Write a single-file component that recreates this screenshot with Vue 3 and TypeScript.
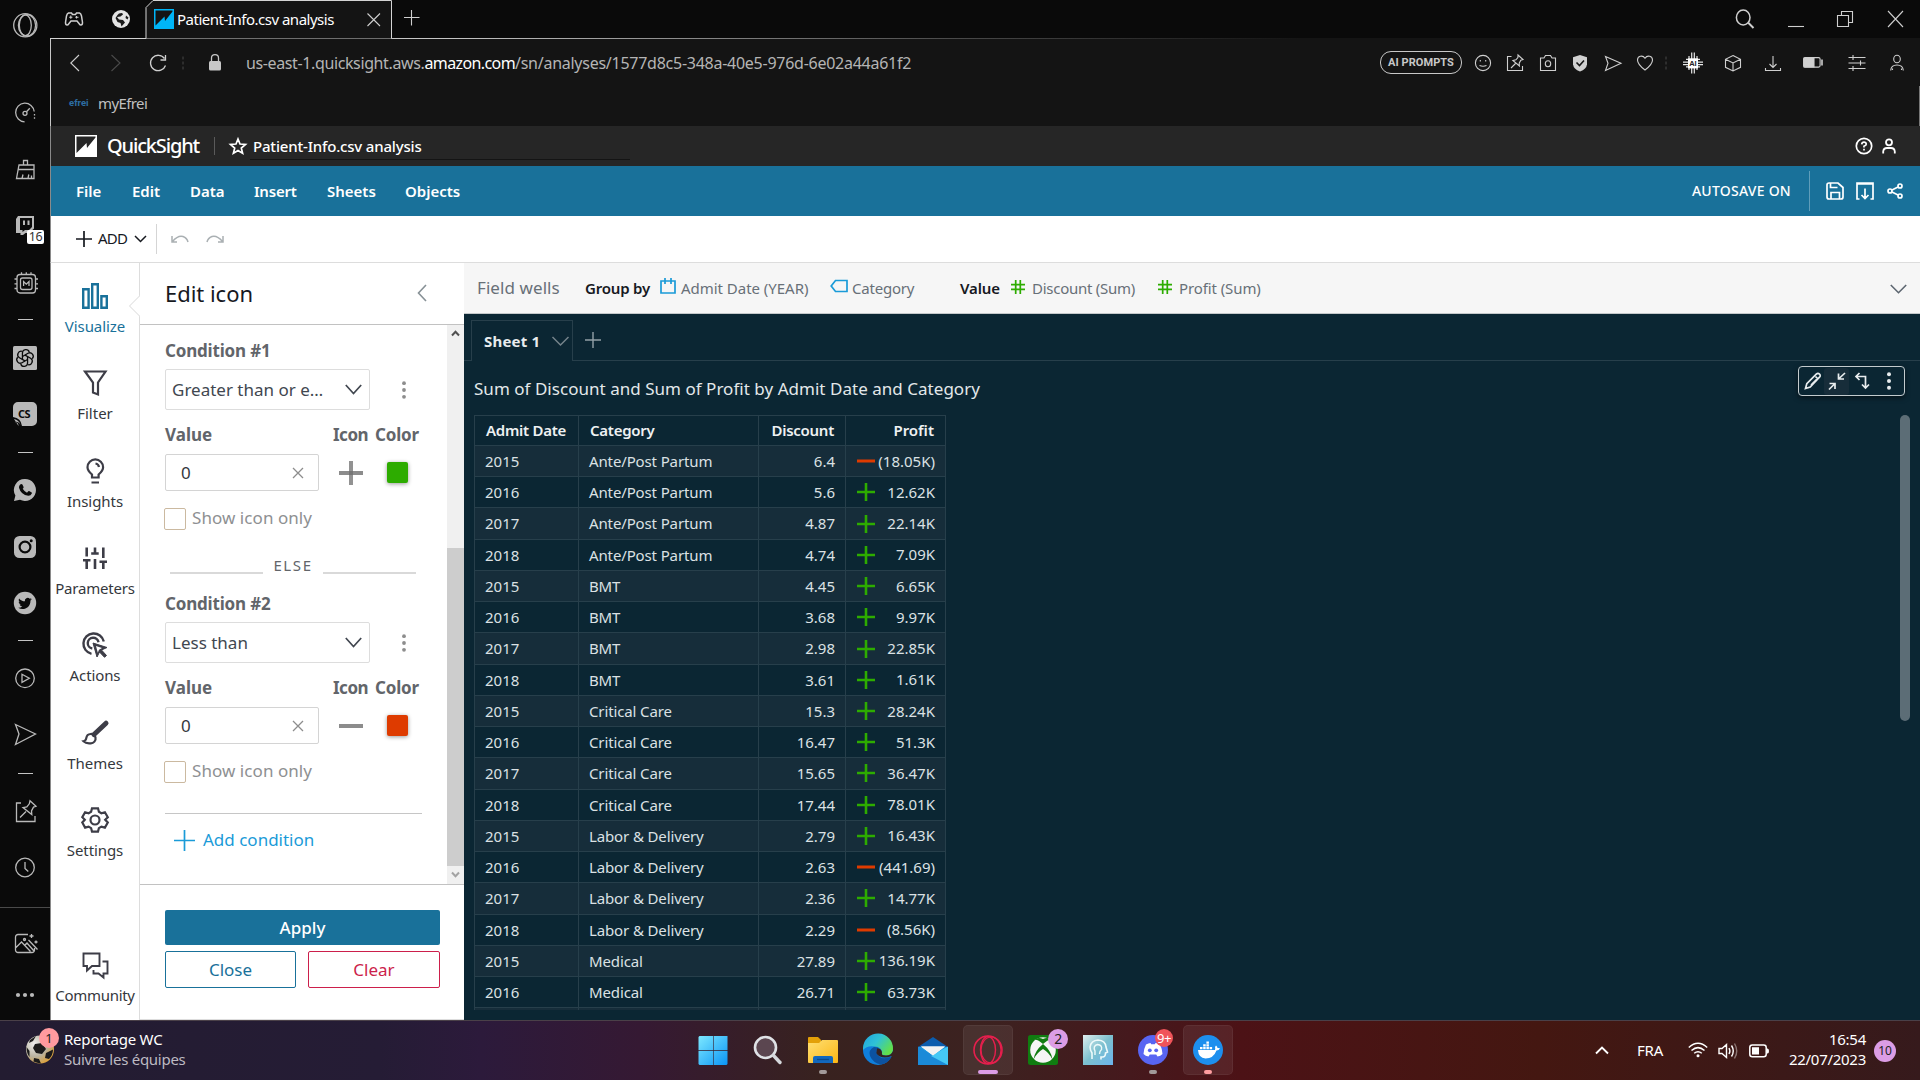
<script setup lang="ts">
interface SideItem { kind: 'icon' | 'dash' | 'rule'; gap: number; svg?: string; badge?: string }
interface NavIcon { gap: number; svg: string }
interface RailItem { label: string; svg: string; track: string; active?: boolean }
interface Row { year: number; category: string; discount: string; profit: string }
interface Condition { title: string; operator: string; value: string; color: string; sign: 'plus' | 'minus' }
interface TaskIcon { svg: string; active?: boolean; mark?: string; badge?: string; badgeKind?: string }

const sideItems: SideItem[] = [
  { kind: 'icon', gap: 13, svg: '<circle cx="12.3" cy="12.3" r="11.6"/><ellipse cx="12.3" cy="12.3" rx="6" ry="10.4"/><ellipse cx="14" cy="12.3" rx="8.6" ry="10.6"/>' },
  { kind: 'icon', gap: 63, svg: '<path d="M11.6 21.8A9.300 9.300 0 1 1 21.200 11.500"/><path d="M21.500 14v6" stroke-dasharray="1.6 1.6"/><circle cx="12" cy="13.300" r="2"/><path d="M13.500 11.800l3.300-3.500"/>' },
  { kind: 'icon', gap: 34, svg: '<path d="M10.500 7V2.500h4V7M6 7h15v13.500H3.500L6 7zM5.500 11.500h15.500M9 20.500l1-4M15 20.500l.8-4M18.500 20.500v-3"/>' },
  { kind: 'icon', gap: 32, badge: '16', svg: '<path fill="#b9b9b9" stroke="none" d="M5 2h16v12.500l-5 4.500h-3.500L10 21H7.500v-2H3V5z"/><path fill="#0a0a0a" stroke="none" d="M7 4h12v9l-3 3h-4l-2.500 2v-2H7z"/><path d="M11 6.500v4.500M15.500 6.500v4.500" stroke-width="2"/>' },
  { kind: 'icon', gap: 33, svg: '<rect x="4" y="3.5" width="18.5" height="18.5" rx="3"/><rect x="7.5" y="7" width="11.5" height="11.5" rx="2"/><path d="M8.500 3.500V1.200M13.300 3.500V1.200M18 3.500V1.200M4 8H1.500M4 12.800H1.500M4 17.500H1.500M22.500 8H25M22.500 12.800H25M22.500 17.500H25M10.600 15v-4.500l2.700 2.600 2.700-2.600V15"/>' },
  { kind: 'dash', gap: 24 },
  { kind: 'icon', gap: 26, svg: '<rect x="0" y="0" width="24" height="24" rx="1.5" fill="#b9b9b9" stroke="none"/><g stroke="#0a0a0a" stroke-width="1.3"><path d="M9.500 10.500l5.500-3.200a3.500 3.500 0 0 1 4.300 5.400"/><path d="M9.500 10.500l5.500-3.200a3.500 3.500 0 0 1 4.300 5.400" transform="rotate(60 12 12)"/><path d="M9.500 10.500l5.500-3.200a3.500 3.500 0 0 1 4.300 5.400" transform="rotate(120 12 12)"/><path d="M9.500 10.500l5.500-3.200a3.500 3.500 0 0 1 4.300 5.400" transform="rotate(180 12 12)"/><path d="M9.500 10.500l5.500-3.200a3.500 3.500 0 0 1 4.300 5.400" transform="rotate(240 12 12)"/><path d="M9.500 10.500l5.500-3.200a3.500 3.500 0 0 1 4.300 5.400" transform="rotate(300 12 12)"/></g>' },
  { kind: 'icon', gap: 32, svg: '<path d="M5 0h14a5 5 0 0 1 5 5v14a5 5 0 0 1-5 5H9Q8 16 0 15V5a5 5 0 0 1 5-5z" fill="#b9b9b9" stroke="none"/><path d="M1 17q5 1 6.500 6q-2-4-6-3q4 0 4 4" fill="#b9b9b9" stroke="none"/><text x="5" y="16" font-size="11" font-weight="700" fill="#0a0a0a" stroke="none" letter-spacing="-.6">CS</text>' },
  { kind: 'dash', gap: 26 },
  { kind: 'icon', gap: 25, svg: '<path d="M12 1a11 11 0 1 1-5 20.800L1 23l1.400-5.500A11 11 0 0 1 12 1z" fill="#b9b9b9" stroke="none"/><path d="M7.200 6.500q1.300-1.200 2.200 0l1.200 2.400q.2.800-.9 1.900q1.600 2.700 4.300 3.900l1.300-1.500q.6-.5 1.300 0l2.100 1.200q.4.400.1 1.200q-1 2.300-3.500 2.200Q8 17 6 9.800q-.2-2 1.200-3.300z" fill="#0a0a0a" stroke="none"/>' },
  { kind: 'icon', gap: 33, svg: '<rect x="1" y="1" width="22" height="22" rx="5.5" fill="#b9b9b9" stroke="none"/><circle cx="12" cy="12" r="5.4" stroke="#0a0a0a" stroke-width="2.2"/><circle cx="18.2" cy="5.8" r="1.5" fill="#0a0a0a" stroke="none"/>' },
  { kind: 'icon', gap: 32, svg: '<circle cx="12" cy="12" r="11.2" fill="#b9b9b9" stroke="none"/><path fill="#0a0a0a" stroke="none" d="M18.900 8.100c-.5.200-1 .4-1.600.5.600-.4 1-.9 1.200-1.500-.5.300-1.100.5-1.800.7a2.800 2.800 0 0 0-4.800 2.500c-2.300-.1-4.400-1.200-5.800-2.900-.7 1.200-.4 2.900.9 3.800-.5 0-.9-.1-1.300-.4 0 1.400 1 2.500 2.300 2.800-.4.100-.8.100-1.300 0 .4 1.100 1.400 1.900 2.600 2-1.200.9-2.600 1.300-4.100 1.200 4.900 3 12.300.5 12.300-7.300.6-.4 1-.9 1.400-1.400z"/>' },
  { kind: 'dash', gap: 25 },
  { kind: 'icon', gap: 25, svg: '<circle cx="12" cy="12.3" r="9.3"/><path d="M9 8.300l7.300 4-7.300 4z"/>' },
  { kind: 'icon', gap: 32, svg: '<path d="M2.500 2.500L22.500 12 2.500 22.500 6 12z"/>' },
  { kind: 'dash', gap: 27 },
  { kind: 'icon', gap: 25, svg: '<path d="M8 4H3.500v18.500H22V17M17 1.800l6 5.500-2.500.8-2 3.800.3 3.700-8.800-7 3.800-.8 2.500-3zM13 12.500l-6 6"/>' },
  { kind: 'icon', gap: 32, svg: '<circle cx="12" cy="12.5" r="9.3"/><path d="M12 7v6.500l3.300 3"/>' },
  { kind: 'rule', gap: 28 },
  { kind: 'icon', gap: 23, svg: '<path d="M15 3.500H5A2.500 2.500 0 0 0 2.500 6v13A2.500 2.500 0 0 0 5 21.500h14a2.500 2.500 0 0 0 2.500-2.500v-2M2.500 17l6-6 9 9.500M12 14l2-2 7 8M24.500 18.500L15.500 9"/><circle cx="11.5" cy="8.5" r="1"/><path d="M18.500 3v4M16.500 5h4M23 9.500v3M21.500 11h3"/>' },
  { kind: 'icon', gap: 28, svg: '<g fill="#b9b9b9" stroke="none"><circle cx="5" cy="12" r="2.1"/><circle cx="12" cy="12" r="2.1"/><circle cx="19" cy="12" r="2.1"/></g>' }
]

const navIcons: NavIcon[] = [
  { gap: 11, svg: '<circle cx="10" cy="10" r="7.6"/><path d="M7.300 7v1.500M12.700 7v1.500M6.500 12.500q3.500 1.500 7 0"/>' },
  { gap: 12, svg: '<path d="M6.500 3.500H2.500v14h15v-4.500M13 2l5 4.500-2.200.7-1.600 3 .2 2.800-6.500-5.500 3-.7 2-2.300zM10.500 10.500L6 15"/>' },
  { gap: 13, svg: '<path d="M2.500 5H6l1.500-2.500h5L14 5h3.500v12.500h-15z"/><ellipse cx="10" cy="10.8" rx="2.7" ry="3"/>' },
  { gap: 12, svg: '<path d="M10 2l7 2.200v7Q16.500 16 10 18.500 3.500 16 3 11.200v-7z" fill="#d0d0d0" stroke="none"/><path d="M6.500 9.500l3 3 4.500-5" stroke="#141414" stroke-width="1.6"/>' },
  { gap: 13, svg: '<path d="M2.500 3.500L18 10.300 2.500 17.500 5 10.300z"/>' },
  { gap: 12, svg: '<path d="M10 17C4 12.500 2.500 10 2.500 7c0-3.700 5-5.500 7.500-1.700 2.500-3.800 7.500-2 7.500 1.700 0 3-1.500 5.500-7.500 10z"/>' },
  { gap: 1, svg: '<path d="M10 3.500v13" stroke="#444" stroke-dasharray="3 2"/>' },
  { gap: 7, svg: '<path d="M8.700 0v21M11.300 0v21M6 3.500v14M14 3.500v14M3 7h14M0 9.700h20M0 12.300h20M3 14.500h14" transform="translate(0 -.6)" stroke="#e8e8e8" stroke-width="1.2"/><rect x="5" y="5.4" width="10" height="10" fill="#fff" stroke="none"/><text x="6.2" y="13.2" font-size="7.5" font-weight="700" fill="#222" stroke="none">AI</text>' },
  { gap: 20, svg: '<path d="M10 2.500l7.500 3.800v8L10 18l-7.500-3.700v-8zM2.500 6.300L10 10l7.500-3.700M10 10v8"/>' },
  { gap: 20, svg: '<path d="M10 3v11.500M6.500 11l3.500 3.500 3.500-3.500M2.500 15v2.500h15V15"/>' },
  { gap: 20, svg: '<rect x=".6" y="4.6" width="16.5" height="9.5" rx="1.5"/><path d="M1 5h10v9H1z" fill="#d0d0d0"/><path d="M19 6.500v6" stroke-width="1.6"/>' },
  { gap: 24, svg: '<path d="M1.500 4.500h17M1.500 10h17M1.500 15.500h17M6 2v5M13.500 7.500v5M6 13v5"/>' },
  { gap: 20, svg: '<ellipse cx="10" cy="6" rx="3.3" ry="3.8"/><path d="M3.700 17.500q.3-5.500 6.300-5.500t6.300 5.500M5.500 17v-1.500M14.500 17v-1.500"/>' }
]

const menus: string[] = ['File', 'Edit', 'Data', 'Insert', 'Sheets', 'Objects']

const railItems: RailItem[] = [
  { label: 'Visualize', track: '-.06', active: true, svg: '<path d="M1.200 6.200h5.400v18.600H1.200zM10.200 1.200h5.600v23.600h-5.600zM19.400 13.200h5.400v11.600h-5.400z"/>' },
  { label: 'Filter', track: '0', svg: '<path d="M3 1.500h20.500l-7.500 11v12l-5-2V12.500z"/>' },
  { label: 'Insights', track: '-.05', svg: '<path d="M10 19.500v-3Q5.500 12.500 5.500 9.200a7.800 7.800 0 0 1 15.600 0q0 3.300-4.500 7.300v3zM9.500 24.500h7.500M13.500 5.500q3 .5 3.500 3.500"/>' },
  { label: 'Parameters', track: '-.2', svg: '<path d="M4.700 2.500v9M4.700 16v8M1 15.200h7.500M13 2.500v7M13 14v10M9.200 8.500h7.500M21.300 2.500v10.500M21.300 17v7M17.500 16.800H25" stroke-width="2.6"/>' },
  { label: 'Actions', track: '-.1', svg: '<path d="M9.500 21.800A10.300 10.300 0 1 1 21.800 9.500M10.300 16.500a5.400 5.400 0 1 1 6.200-6.200" stroke-width="2.4"/><path d="M11 11l14 4.500-5.500 2.500 5 5.500-2 1.800-5-5.300-2.500 5z" fill="#3d3d47" stroke-width="1"/><path d="M14 14l6 2-3 1.800-1.200 3z" fill="#fff" stroke="none"/>' },
  { label: 'Themes', track: '0', svg: '<path d="M12 14.500L24 3.200" stroke-width="5" stroke-linecap="round"/><path d="M13.500 17.500a4.800 4.800 0 0 1-5 5.800q-4.500.5-7-2 2.500-.5 2.800-3.300a4.700 4.700 0 0 1 9.200-.5z"/>' },
  { label: 'Settings', track: '-.1', svg: '<path d="M10 1.300h6l.9 3.500 2.500 1.400 3.500-1 2.900 5-2.600 2.600 2.600 2.700-2.900 5.100-3.500-1-2.500 1.500-.9 3.500h-6l-.9-3.500-2.500-1.500-3.500 1-2.800-5.100 2.500-2.700L.3 10.200l2.800-5 3.500 1 2.500-1.400z"/><circle cx="13" cy="13" r="4.5"/>' },
  { label: 'Community', track: '-.3', svg: '<path d="M1.500 1.500h16v12.500H10l-5 4.500V14H1.500zM20.500 9.500h5V21.500H21.500v4l-5-4H11.500V18" stroke-width="1.9"/>' }
]

const conditions: Condition[] = [
  { title: 'Condition #1', operator: 'Greater than or e…', value: '0', color: '#2dac00', sign: 'plus' },
  { title: 'Condition #2', operator: 'Less than', value: '0', color: '#de3b00', sign: 'minus' }
]

const rows: Row[] = [
  { year: 2015, category: 'Ante/Post Partum', discount: '6.4', profit: '(18.05K)' },
  { year: 2016, category: 'Ante/Post Partum', discount: '5.6', profit: '12.62K' },
  { year: 2017, category: 'Ante/Post Partum', discount: '4.87', profit: '22.14K' },
  { year: 2018, category: 'Ante/Post Partum', discount: '4.74', profit: '7.09K' },
  { year: 2015, category: 'BMT', discount: '4.45', profit: '6.65K' },
  { year: 2016, category: 'BMT', discount: '3.68', profit: '9.97K' },
  { year: 2017, category: 'BMT', discount: '2.98', profit: '22.85K' },
  { year: 2018, category: 'BMT', discount: '3.61', profit: '1.61K' },
  { year: 2015, category: 'Critical Care', discount: '15.3', profit: '28.24K' },
  { year: 2016, category: 'Critical Care', discount: '16.47', profit: '51.3K' },
  { year: 2017, category: 'Critical Care', discount: '15.65', profit: '36.47K' },
  { year: 2018, category: 'Critical Care', discount: '17.44', profit: '78.01K' },
  { year: 2015, category: 'Labor & Delivery', discount: '2.79', profit: '16.43K' },
  { year: 2016, category: 'Labor & Delivery', discount: '2.63', profit: '(441.69)' },
  { year: 2017, category: 'Labor & Delivery', discount: '2.36', profit: '14.77K' },
  { year: 2018, category: 'Labor & Delivery', discount: '2.29', profit: '(8.56K)' },
  { year: 2015, category: 'Medical', discount: '27.89', profit: '136.19K' },
  { year: 2016, category: 'Medical', discount: '26.71', profit: '63.73K' }
]
const isLoss = (r: Row): boolean => r.profit.startsWith('(')

const taskIcons: TaskIcon[] = [
  { svg: '<defs><linearGradient id="win" x1="0" y1="0" x2="1" y2="1"><stop offset="0" stop-color="#7de8ff"/><stop offset="1" stop-color="#0a94f5"/></linearGradient></defs><path fill="url(#win)" d="M1.500 1h13.700v14H.5V2zM15.800 1h13.700v14H15.800zM.5 15.800h14.700V30H1.500l-1-1zM15.800 15.800h13.700V29l-1 1H15.800z"/>' },
  { svg: '<circle cx="12.5" cy="12.5" r="10.5" fill="#5b4650" stroke="#dfe2e6" stroke-width="2.6"/><path d="M20.500 20.500l6.500 7" stroke="#d5d8dc" stroke-width="3.4" stroke-linecap="round"/>' },
  { mark: 'small', svg: '<defs><linearGradient id="fol" x1="0" y1="0" x2="1" y2="1"><stop offset="0" stop-color="#ffdf73"/><stop offset="1" stop-color="#fcb714"/></linearGradient></defs><path d="M0 3q0-1 1-1h9l3 3v5H0z" fill="#e3a008"/><path d="M0 8h11l3-3h15q1 0 1 1v21q0 1-1 1H1q-1 0-1-1z" fill="url(#fol)"/><path d="M5 28v-5q0-2 2-2h16q2 0 2 2v5z" fill="#1268bd"/><path d="M9 24.500h12" stroke="#0b4a8c" stroke-width="1.3"/>' },
  { svg: '<defs><linearGradient id="edg" x1="0" y1="0" x2="1" y2=".6"><stop offset="0" stop-color="#1fa2e0"/><stop offset=".5" stop-color="#2fc2d6"/><stop offset="1" stop-color="#62e04a"/></linearGradient></defs><circle cx="15" cy="15" r="15" fill="#0f7fdc"/><path d="M0 13A15 15 0 0 1 30 14q0 6-7 6.500-5 0-4-2.500Q19 12 12 11.500 4 10 0 15z" fill="url(#edg)"/><path d="M11 12q-6 3-4 9 3 7 11 8.500 7-1 10.500-8-9 4-13.500-1-3-4 0-8z" fill="#0c52a0"/><path d="M14.500 13q-3 5 1.500 8 5.500 3 12.500 0l1.500 3V16q-2 4.500-7 4.500t-4-2.500q0-4-4.500-5z" fill="#36221f"/>' },
  { svg: '<path d="M0 12L15 2l15 10z" fill="#0b5cad"/><path d="M0 12h30v18H0z" fill="#1f9be0"/><path d="M3 11.500h24L15 20.500z" fill="#f2f2f2"/><path d="M0 11.500L30 30H0z" fill="#1b8ad8"/><path d="M30 11.500L13 21l17 9z" fill="#45c8f5"/><path d="M3 11.500h24L15 20.500z" fill="#f2f2f2"/>' },
  { active: true, mark: 'wide', svg: '<g fill="none" stroke="#e61f4d"><circle cx="15" cy="15" r="14" stroke-width="1.6"/><ellipse cx="15" cy="15" rx="7.5" ry="13.5" stroke-width="1.4"/><ellipse cx="18" cy="15" rx="10" ry="13" stroke-width="1.2"/></g>' },
  { badge: '2', badgeKind: 'lilac', svg: '<rect width="30" height="30" y="0" rx="2.5" fill="#107c10"/><circle cx="15" cy="15" r="12.8" fill="#f5f5f5"/><path d="M15 9Q9 3.500 6 5q4-3.500 9-1 5-2.500 9 1-3-1.500-9 4zM5.500 24.500Q6.500 16 15 9q8.500 7 9.500 15.500Q21 17.500 15 14q-6 3.500-9.500 10.500z" fill="#107c10"/>' },
  { svg: '<defs><linearGradient id="head" x1="0" y1="0" x2="1" y2="1"><stop offset="0" stop-color="#dfeeee"/><stop offset=".5" stop-color="#7cc0cf"/><stop offset="1" stop-color="#6bb4ec"/></linearGradient></defs><path d="M0 0h30v30H0z" fill="url(#head)"/><path d="M9 24v-6q-2-3-2-6 1-6.500 8-7 7.500.5 8 7l1.500 5-2 1q0 4-3 4H18v2.500" fill="none" stroke="#eefafa" stroke-width="1.600"/><path d="M12 20v-4q-2.500-5 2.500-6.500 5 .5 4 5-2 1.500-2 4.500" fill="none" stroke="#eefafa" stroke-width="1.4"/>' },
  { badge: '9+', badgeKind: 'red', mark: 'small', svg: '<circle cx="15" cy="15" r="15" fill="#5865f2"/><path d="M8 9.500q2.500-1.500 4.500-1.500l.7 1.200h3.600l.7-1.200q2 0 4.500 1.500 2.500 5 2.500 9.500-2 2-5 2.500l-1.300-2h-6.400l-1.300 2q-3-.5-5-2.500 0-4.500 2.500-9.500z" fill="#fff"/><circle cx="11.8" cy="15.3" r="1.9" fill="#5865f2"/><circle cx="18.2" cy="15.3" r="1.9" fill="#5865f2"/>' },
  { active: true, mark: 'pink', svg: '<circle cx="15" cy="15" r="15" fill="#1d8fee"/><path d="M5 15h17q.5-2 0-3l1-1.500q1.500 1 1.500 2.500 1.500-.3 2.500.3-1 2.200-3.500 2.200-3 8-11 8Q5.500 23 5 15z" fill="#fff"/><path d="M7 12h2.500v2.200H7zM10.200 12h2.500v2.200h-2.500zM13.400 12h2.500v2.200h-2.500zM16.600 12h2.500v2.200h-2.500zM10.200 9.200h2.500v2.200h-2.500zM13.400 9.200h2.500v2.200h-2.500zM13.400 6.500h2.500v2.200h-2.500z" fill="#fff"/>' }
]
</script>

<template>
  <div class="screen">
    <div class="browser">
      <aside class="side">
        <div v-for="(s, i) in sideItems" :key="i" :class="['side-item', s.kind]" :style="{ marginTop: s.gap + 'px' }">
          <svg v-if="s.svg" width="24" height="24" viewBox="0 0 24 24" v-html="s.svg"></svg>
          <span v-if="s.badge" class="side-badge">{{ s.badge }}</span>
        </div>
      </aside>

      <div class="window">
        <header class="tabs">
          <div class="tab-pins">
            <svg width="20" height="20" viewBox="0 0 20 20" class="line"><path stroke-width="1.5" d="M4.500 4h3l1 1.500h3l1-1.500h3q1.500.5 2 3l1 6.500q0 2.500-1.500 2.500-1 0-2-1.500L13 12H7l-2 2.500Q4 16 3 16q-1.500 0-1.500-2.500L2.500 7q.5-2.500 2-3z"/><path d="M5.200 8.200h3.200M6.800 6.600v3.200M12.500 7v2.500M11.300 8.200h3.200" /></svg>
            <svg width="20" height="20" viewBox="0 0 20 20"><circle cx="10" cy="10" r="9" fill="#e4e4e4"/><path d="M8 4.500q4-1.500 4 1L9.500 7.500 6 8l2 2.500 4 .5 2 2.500-3.500 4-1-3.500-3-1-2-4 2-3zM15 6.500l2.500 2-1 2-2-1.500z" fill="#1a1a1a"/></svg>
          </div>
          <div class="tab">
            <svg class="tab-shape" width="246" height="39" viewBox="0 0 246 39"><path d="M0 38.500V7.500L7 .5h238.500v38" fill="#141414" stroke="#d4d4d4"/></svg>
            <svg width="20" height="20" viewBox="0 0 20 20"><path fill="#00b5f7" d="M0 0h20v20H0z"/><path d="M1.500 1.500h17v1L11 12l-.5-4.500L1.500 16.500z" fill="#141414"/></svg>
            <span class="tab-title">Patient-Info.csv analysis</span>
            <svg class="line tab-close" width="14" height="14" viewBox="0 0 14 14"><path d="M.5.5l12.500 12.500M13 .5L.5 13" /></svg>
          </div>
          <svg class="line tab-new" width="16" height="16" viewBox="0 0 16 16"><path d="M7.500 0v15.500M0 7.500H15.500"/></svg>
          <div class="win-controls">
            <svg class="line" width="20" height="20" viewBox="0 0 20 20"><ellipse cx="8.2" cy="8.5" rx="6.8" ry="7.5" stroke-width="1.5"/><path d="M13 13.500l5.500 5.500" stroke-width="2"/></svg>
            <svg class="line" width="16" height="20" viewBox="0 0 16 20"><path d="M0 17.500h16"/></svg>
            <svg class="line" width="18" height="18" viewBox="0 0 18 18"><path d="M4.500 4.500V.5h11v11H11.500M.5 4.500h11V15.500H.5z"/></svg>
            <svg class="line" width="18" height="18" viewBox="0 0 18 18"><path d="M1 0l15 16M16 0L1 16"/></svg>
          </div>
        </header>
        <div class="chrome-line"></div>

        <div class="nav">
          <svg class="line back" width="10" height="18" viewBox="0 0 10 18"><path d="M9 1L.8 9 9 17"/></svg>
          <svg class="line dim fwd" width="10" height="18" viewBox="0 0 10 18"><path d="M.5 1L9 9 .5 17"/></svg>
          <svg class="line reload" width="18" height="18" viewBox="0 0 18 18"><path d="M16.500 11.500A7.700 7.700 0 1 1 15.500 4.500M16.500 1v5h-5" stroke-width="1.3"/></svg>
          <svg class="line nav-dots" width="4" height="16" viewBox="0 0 4 16"><path d="M2 1.500v13" stroke="#444" stroke-dasharray="3 2"/></svg>
          <svg class="lock" width="12" height="17" viewBox="0 0 12 17"><rect y="7" width="12" height="9.5" rx="1.5" fill="#c8c8c8"/><path d="M2.500 8V4q0-3.300 3.500-3.300T9.500 4v4" fill="none" stroke="#c8c8c8" stroke-width="1.3"/></svg>
          <div class="url"><span class="u1">us-east-1.quicksight.aws.</span><span class="u2">amazon.com</span><span class="u3">/sn/analyses/1577d8c5-348a-40e5-976d-6e02a44a61f2</span></div>
          <div class="nav-right">
            <span class="ai-pill">AI PROMPTS</span>
            <svg v-for="(n, i) in navIcons" :key="i" class="line" width="20" height="20" viewBox="0 0 20 20" :style="{ marginLeft: n.gap + 'px' }" v-html="n.svg"></svg>
          </div>
        </div>
        <div class="bookmarks"><b>efrei</b><span>myEfrei</span></div>

        <div class="qs-head">
          <svg width="22" height="22" viewBox="0 0 22 22"><path fill="#fff" d="M0 0h22v22H0z"/><path d="M1.500 1.500h19v1L12 13l-.5-5L1.500 18z" fill="#262626"/></svg>
          <span class="brand">QuickSight</span>
          <i class="head-sep"></i>
          <svg class="star" width="18" height="18" viewBox="0 0 18 18"><path d="M9 2l2 5 5.500.5-4.200 3.500 1.300 5.300L9 13.500l-4.600 2.800L5.700 11 1.500 7.500 7 7z" fill="none" stroke="#fff" stroke-width="1.7"/></svg>
          <span class="doc">Patient-Info.csv analysis</span>
          <div class="head-right">
            <svg width="18" height="18" viewBox="0 0 18 18" fill="none" stroke="#fff" stroke-width="1.7"><circle cx="9" cy="9" r="7.7"/><path d="M6.700 7.300Q7 5.200 9 5.200t2.300 1.900Q11.300 8.500 9 9.200v1.300M9 11.800v1.700"/></svg>
            <svg width="14" height="18" viewBox="0 0 14 18" fill="none" stroke="#fff" stroke-width="1.8"><circle cx="7" cy="5.3" r="3"/><path d="M1.200 16.500v-2Q1.500 11 5 11h4q3.500 0 3.800 3.500v2"/></svg>
          </div>
        </div>

        <nav class="menu">
          <span v-for="m in menus" :key="m" :class="'m-' + m.toLowerCase()">{{ m }}</span>
          <div class="menu-right">
            <span class="autosave">AUTOSAVE ON</span>
            <i></i>
            <svg width="18" height="18" viewBox="0 0 18 18"><path d="M1 3q0-2 2-2h9l5 4.500V15q0 2-2 2H3q-2 0-2-2zM4.500 1v4.500h7M5 17v-6.500h8.500V17"/></svg>
            <svg width="18" height="18" viewBox="0 0 18 18"><path d="M3.500 17H1V1h16v16h-2.500M1 2h16M9 6.500v10M5.500 13l3.500 3.500 3.500-3.500"/></svg>
            <svg width="16" height="16" viewBox="0 0 16 16"><circle cx="3" cy="8" r="2"/><circle cx="13" cy="3" r="2"/><circle cx="13" cy="13" r="2"/><path d="M5 7l6-3M5 9l6 3"/></svg>
          </div>
        </nav>

        <div class="toolbar">
          <svg width="16" height="16" viewBox="0 0 16 16"><path d="M8 0v16M0 8h16" stroke="#16191f" stroke-width="1.7"/></svg>
          <span>ADD</span>
          <svg width="13" height="8" viewBox="0 0 13 8"><path d="M1 1l5.500 5.500L12 1" stroke="#16191f" stroke-width="1.5" fill="none"/></svg>
          <i></i>
          <svg width="18" height="10" viewBox="0 0 18 10" class="hist"><path d="M1 2v6h5M1.500 7.500Q7 1 12 2.500q4 1.500 5 5.500"/></svg>
          <svg width="18" height="10" viewBox="0 0 18 10" class="hist redo"><path d="M17 2v6h-5M16.500 7.500Q11 1 6 2.500 2 4 1 8"/></svg>
        </div>

        <div class="body">
          <aside class="rail">
            <div v-for="r in railItems" :key="r.label" :class="['rail-item', { active: r.active }]">
              <svg width="26" height="26" viewBox="0 0 26 26" v-html="r.svg"></svg>
              <span :style="{ letterSpacing: r.track + 'px' }">{{ r.label }}</span>
            </div>
            <svg class="notch" width="12" height="22" viewBox="0 0 12 22"><path d="M12 .5L1.500 11 12 21.500z" fill="#fff" stroke="none"/><path d="M11.500 1L1.500 11l10 10" fill="none" stroke="#d9d9d9"/></svg>
          </aside>

          <section class="panel">
            <div class="panel-head">
              <h2>Edit icon</h2>
              <svg width="10" height="18" viewBox="0 0 10 18"><path d="M9 1L1.500 9 9 17" fill="none" stroke="#879196" stroke-width="1.6"/></svg>
            </div>
            <div class="panel-scroll">
              <div class="conds">
                <template v-for="(c, i) in conditions" :key="c.title">
                  <div v-if="i > 0" class="else"><i></i><span>ELSE</span><i></i></div>
                  <div class="cond">
                    <h3>{{ c.title }}</h3>
                    <div class="op-row">
                      <div class="select"><span>{{ c.operator }}</span>
                        <svg width="17" height="11" viewBox="0 0 17 11"><path d="M.8 1l7.700 8.500L16.200 1" fill="none" stroke="#414750" stroke-width="1.7"/></svg>
                      </div>
                      <svg width="4" height="18" viewBox="0 0 4 18" fill="#8d8d8d"><circle cx="2" cy="2.2" r="1.9"/><circle cx="2" cy="9" r="1.9"/><circle cx="2" cy="15.8" r="1.9"/></svg>
                    </div>
                    <div class="labels"><span>Value</span><span>Icon</span><span>Color</span></div>
                    <div class="val-row">
                      <div class="input"><span>{{ c.value }}</span>
                        <svg width="12" height="12" viewBox="0 0 12 12"><path d="M1 1l10 10M11 1L1 11" stroke="#8d8d8d" stroke-width="1.3"/></svg>
                      </div>
                      <svg class="sign" width="24" height="24" viewBox="0 0 24 24"><path d="M0 12h24" stroke="#8c8c8c" stroke-width="4"/><path v-if="c.sign === 'plus'" d="M12 0v24" stroke="#6e6e6e" stroke-opacity=".75" stroke-width="4"/></svg>
                      <i class="swatch" :style="{ background: c.color }"></i>
                    </div>
                    <div class="check"><i></i><span>Show icon only</span></div>
                  </div>
                </template>
                <div class="add-cond">
                  <svg width="21" height="21" viewBox="0 0 21 21"><path d="M10.500 0v21M0 10.500h21" stroke="#1a9bd8" stroke-width="1.7"/></svg>
                  <span>Add condition</span>
                </div>
              </div>
              <div class="scrollbar">
                <svg width="17" height="17" viewBox="0 0 17 17"><path d="M5 10.500l3.500-3.700 3.500 3.700" stroke="#505050" stroke-width="2" fill="none"/></svg>
                <i></i>
                <svg width="17" height="18" viewBox="0 0 17 18"><path d="M5 6.500l3.500 3.700L12 6.500" stroke="#a3a3a3" stroke-width="2" fill="none"/></svg>
              </div>
            </div>
            <div class="panel-foot">
              <button class="apply">Apply</button>
              <div class="pair"><button class="close">Close</button><button class="clear">Clear</button></div>
            </div>
          </section>

          <main class="canvas">
            <div class="wells">
              <span class="w-title">Field wells</span>
              <b class="w-group">Group by</b>
              <svg width="16" height="16" viewBox="0 0 16 16" class="blue"><path d="M1 3h14v12H1zM5 0v6M11 0v6"/></svg>
              <span class="w-date">Admit Date (YEAR)</span>
              <svg width="18" height="14" viewBox="0 0 18 14" class="blue tag"><path d="M5.500 1.500H17v11H5.500L1.200 7z"/></svg>
              <span class="w-cat">Category</span>
              <b class="w-value">Value</b>
              <svg width="14" height="14" viewBox="0 0 14 14" class="hash"><path d="M4.700 0v14M9.300 0v14M0 4.700h14M0 9.300h14"/></svg>
              <span class="w-disc">Discount (Sum)</span>
              <svg width="14" height="14" viewBox="0 0 14 14" class="hash"><path d="M4.700 0v14M9.300 0v14M0 4.700h14M0 9.300h14"/></svg>
              <span class="w-prof">Profit (Sum)</span>
              <svg width="17" height="10" viewBox="0 0 17 10" class="w-chev"><path d="M.8 1l7.700 7.700L16.200 1" fill="none" stroke="#5d6670" stroke-width="1.6"/></svg>
            </div>
            <div class="sheets">
              <div class="sheet"><span>Sheet 1</span>
                <svg width="17" height="10" viewBox="0 0 17 10"><path d="M.5 1l8 8 8-8" fill="none" stroke="#75838b" stroke-width="1.5"/></svg>
              </div>
              <div class="sheet-rest"><svg width="16" height="16" viewBox="0 0 16 16"><path d="M8 0v16M0 8h16" stroke="#93a0a7" stroke-width="1.4"/></svg></div>
            </div>
            <div class="visual">
              <h1>Sum of Discount and Sum of Profit by Admit Date and Category</h1>
              <div class="table">
                <div class="tr th"><span>Admit Date</span><span>Category</span><span>Discount</span><span>Profit</span></div>
                <div v-for="(r, i) in rows" :key="i" :class="['tr', { odd: i % 2 === 0 }]">
                  <span>{{ r.year }}</span><span>{{ r.category }}</span><span>{{ r.discount }}</span>
                  <span class="profit">
                    <svg width="18" height="18" viewBox="0 0 18 18"><path v-if="isLoss(r)" d="M0 9h18" stroke="#de3b00" stroke-width="3"/><path v-else d="M0 9h18M9 0v18" stroke="#2dac00" stroke-width="2.6"/></svg>
                    {{ r.profit }}
                  </span>
                </div>
                <div class="tr odd"><span></span><span></span><span></span><span></span></div>
              </div>
              <div class="tools">
                <svg width="18" height="18" viewBox="0 0 18 18"><path d="M1.500 16.500l1.300-4.800L12.500 2q1.500-1.200 3 .2t0 3L6.200 15zM11.500 4.500l2 2-6.500 6.500"/></svg>
                <svg class="hl" width="25" height="27" viewBox="0 0 25 27"><path d="M5.500 15.500h5.500V21M11 15.500L5 21.500M20 11h-5.500V5.500M14.500 11L21 5"/></svg>
                <svg width="16" height="18" viewBox="0 0 16 18"><path d="M1 4.500h9.500V16M4.500 1L1 4.500 4.500 8M7 12.500l3.500 3.500 3.500-3.500"/></svg>
                <svg width="4" height="18" viewBox="0 0 4 18"><g fill="#e8ecee" stroke="none"><circle cx="2" cy="2.3" r="2"/><circle cx="2" cy="9" r="2"/><circle cx="2" cy="15.7" r="2"/></g></svg>
              </div>
              <i class="vscroll"></i>
            </div>
          </main>
        </div>
      </div>
    </div>

    <footer class="taskbar">
      <div class="widget">
        <svg width="32" height="32" viewBox="0 0 32 32"><defs><radialGradient id="ball" cx=".3" cy=".3" r=".9"><stop offset="0" stop-color="#eee"/><stop offset=".5" stop-color="#b9b3a0"/><stop offset="1" stop-color="#e89a12"/></radialGradient></defs><circle cx="15" cy="16.5" r="14" fill="url(#ball)"/><path d="M10 11l7-1 4 6-4 5-6-1-3-5zM1.500 14l3 4v6q-3-4-3-10zM21 20l7-3.500Q28 22 24 26l-4-1zM9 25l5 1 2 4.500Q12 30 8.500 28.500zM5 7l6-4-3 5-4 2z" fill="#1c1c1c"/></svg>
        <span class="w-badge">1</span>
        <div class="w-text"><span>Reportage WC</span><span>Suivre les équipes</span></div>
      </div>
      <div class="apps">
        <div v-for="(t, i) in taskIcons" :key="i" :class="['app', { on: t.active }]">
          <svg width="30" height="30" viewBox="0 0 30 30" v-html="t.svg"></svg>
          <i v-if="t.mark" :class="['mark', t.mark]"></i>
          <span v-if="t.badge" :class="['app-badge', t.badgeKind]">{{ t.badge }}</span>
        </div>
      </div>
      <div class="tray">
        <svg width="14" height="9" viewBox="0 0 14 9"><path d="M1 7.500L7 1.500l6 6" fill="none" stroke="#fff" stroke-width="1.9"/></svg>
        <span class="lang">FRA</span>
        <svg class="wifi" width="20" height="16" viewBox="0 0 20 16" fill="none" stroke="#fff" stroke-width="1.5"><path d="M.8 5.500q9.200-8.500 18.400 0M3.500 8.500q6.500-5.800 13 0M6.200 11.300q3.800-3.200 7.600 0"/><circle cx="10" cy="13.8" r="1.5" fill="#fff" stroke="none"/></svg>
        <svg class="vol" width="20" height="18" viewBox="0 0 20 18" fill="none" stroke="#fff" stroke-width="1.4"><path d="M1 6.500h3l4.500-4v13l-4.500-4H1zM11 6q1.800 3 0 6M13.500 3.500q3.500 5.500 0 11"/><path d="M16.500 1.500q4.500 7.500 0 15" stroke="#8b7573"/></svg>
        <svg width="20" height="14" viewBox="0 0 20 14"><rect x=".8" y="1" width="16.4" height="11.8" rx="2.5" fill="none" stroke="#fff" stroke-width="1.5"/><path d="M3 3.300h7v7.200H3zM17.500 4.500h1q1.500 0 1.500 2.500t-1.500 2.500h-1z" fill="#fff"/></svg>
        <div class="clock"><span>16:54</span><span>22/07/2023</span></div>
        <span class="count">10</span>
      </div>
    </footer>
  </div>
</template>

<style>
html, body { margin: 0; background: #0a0a0a; overflow: hidden; }
</style>

<style scoped>
* { box-sizing: border-box; }
.screen { width: 1920px; height: 1080px; overflow: hidden; display: flex; flex-direction: column; font: 400 15px/20px "Noto Sans", "Open Sans", sans-serif; }
.screen :deep(svg) { display: block; flex: none; overflow: visible; }
.browser { display: flex; height: 1020px; background: #0a0a0a; }
.line { fill: none; stroke: #cfcfcf; stroke-width: 1.1; }
.dim { stroke: #4a4a4a; }
i { display: block; flex: none; }
h1, h2, h3 { margin: 0; font-weight: 400; }

/* browser side bar */
.side { width: 50px; flex: none; display: flex; flex-direction: column; align-items: center; }
.side-item { position: relative; flex: none; }
.side-item.icon { height: 24px; width: 24px; }
.side-item.icon svg { fill: none; stroke: #b9b9b9; stroke-width: 1.3; }
.side-item.dash { width: 15px; height: 1px; background: #c4c4c4; }
.side-item.rule { width: 50px; height: 1px; background: #4a4a4a; }
.side-badge { position: absolute; left: 14px; top: 16px; width: 17px; height: 14px; border-radius: 2px; background: #fff; color: #333; font-size: 12.5px; line-height: 14px; text-align: center; letter-spacing: -.3px; }

.window { width: 1870px; flex: none; display: flex; flex-direction: column; }

/* tab strip */
.tabs { height: 38px; display: flex; align-items: flex-start; }
.tab-pins { display: flex; gap: 27px; padding: 9px 0 0 14px; width: 96px; }
.tab { position: relative; width: 246px; height: 38px; display: flex; padding: 9px 0 0 8px; z-index: 1; }
.tab-shape { position: absolute; left: 0; top: 0; }
.tab > :not(.tab-shape) { position: relative; }
.tab-title { margin-left: 3px; width: 191px; line-height: 20px; color: #fff; letter-spacing: -.49px; }
.tab-close { margin: 4px 0 0 -1px; }
.tab-new { margin: 10px 0 0 12px; }
.win-controls { margin: 9px 15px 0 auto; display: flex; gap: 33px; }
.win-controls svg:nth-child(3) { margin-top: 2px; }
.win-controls svg:nth-child(4) { margin: 2px 0 0 -1px; }
.chrome-line { height: 1px; background: linear-gradient(90deg, #d4d4d4 0, #c4c4c4 400px, #4a4a4a 900px, #141414 1250px); }

/* address bar */
.nav { height: 47px; background: #141414; border-left: 1px solid #c8c8c8; display: flex; align-items: center; padding: 0 13px 0 19px; }
.fwd { margin-left: 31px; }
.reload { margin-left: 28px; }
.nav-dots { margin-left: 14px; }
.lock { margin-left: 24px; }
.url { margin-left: 25px; font-size: 16px; color: #b4b4b4; white-space: pre; display: flex; line-height: 24px; }
.u1 { letter-spacing: -.38px; }
.u2 { letter-spacing: -.6px; color: #fff; }
.u3 { letter-spacing: -.26px; }
.nav-right { margin-left: auto; display: flex; align-items: center; }
.nav-right :deep(text) { font-family: "Liberation Sans", sans-serif; }
.ai-pill { width: 82px; height: 23px; border: 1px solid #c8c8c8; border-radius: 11px; color: #c8c8c8; font: 700 11px/21px "Roboto", "Noto Sans", sans-serif; letter-spacing: .05px; text-align: center; white-space: nowrap; }
.bookmarks { height: 40px; background: #141414; border-left: 1px solid #c8c8c8; border-right: 1px solid #777; display: flex; padding: 7px 0 0 18px; color: #c0c0c0; }
.bookmarks b { width: 29px; color: #2d6da3; font: 700 9.5px/20px "Roboto", sans-serif; }
.bookmarks span { letter-spacing: -.6px; }

/* product header */
.qs-head, .menu, .toolbar, .body { border-left: 1px solid #8a8a8a; }
.qs-head { height: 40px; background: #262626; display: flex; align-items: center; padding-left: 24px; color: #fff; }
.brand { margin-left: 10px; width: 93px; font-size: 20px; font-weight: 500; letter-spacing: -1.15px; white-space: nowrap; line-height: 24px; }
.head-sep { width: 1px; height: 18px; background: #5a5a5a; margin-left: 14px; }
.star { margin-left: 14px; }
.doc { margin-left: 3px; padding-left: 3px; width: 380px; height: 26px; line-height: 24px; margin-top: 1px; font-weight: 500; letter-spacing: -.18px; border-bottom: 1px solid #141414; }
.head-right { margin-left: auto; display: flex; gap: 9px; padding-right: 24px; }
.menu { height: 50px; background: #19719a; color: #fff; display: flex; align-items: center; padding-left: 25px; font-weight: 600; }
.menu > span { flex: none; }
.m-file { width: 56px; }
.m-edit { width: 58px; }
.m-data { width: 64px; }
.m-insert { width: 73px; letter-spacing: -.2px; }
.m-sheets { width: 78px; }
.menu-right { margin-left: auto; display: flex; align-items: center; padding-right: 17px; }
.autosave { font-size: 14px; font-weight: 500; letter-spacing: .26px; }
.menu-right i { width: 1px; height: 40px; background: #5f9dba; margin: 0 16px 0 18px; }
.menu-right svg { fill: none; stroke: #fff; stroke-width: 1.7; margin-right: 12px; }
.menu-right svg:nth-of-type(2) { margin-right: 13px; }
.menu-right svg:last-child { margin-right: 0; }
.toolbar { height: 46px; background: #fff; display: flex; align-items: center; padding-left: 25px; color: #16191f; }
.toolbar span { margin: -2px 0 0 6px; width: 29px; letter-spacing: -.83px; }
.toolbar svg:nth-of-type(2) { margin-left: 7px; }
.toolbar i { width: 1px; height: 30px; background: #d5d5d5; margin-left: 9px; }
.hist { margin-left: 14px; fill: none; stroke: #aab0b3; stroke-width: 1.5; }
.hist.redo { margin-left: 17px; }

/* workspace */
.body { display: flex; height: 758px; background: #fff; border-top: 1px solid #ddd; }
.rail { position: relative; width: 89px; flex: none; border-right: 1px solid #ddd; display: flex; flex-direction: column; gap: 34.35px; padding-top: 20px; color: #35383d; }
.rail-item { display: flex; flex-direction: column; align-items: center; gap: 7px; height: 53px; }
.rail-item svg { fill: none; stroke: #3d3d47; stroke-width: 2.2; }
.rail-item:nth-last-child(2) { margin-top: 57.5px; }
.rail-item.active { color: #19719a; }
.rail-item.active svg { stroke: #19719a; stroke-width: 2.4; }
.notch { position: absolute; right: -1px; top: 32px; }
.panel { width: 324px; flex: none; display: flex; flex-direction: column; color: #16191f; }
.panel-head { height: 62px; border-bottom: 1px solid #c2c2c2; display: flex; align-items: center; justify-content: space-between; padding: 0 37px 2px 25px; }
.panel-head h2 { font-size: 22px; line-height: 30px; letter-spacing: -.03px; }
.panel-scroll { height: 559px; display: flex; }
.conds { width: 307px; padding: 14px 25px 0 25px; font-size: 17px; }
.cond { height: 191px; }
.cond h3, .labels { font-size: 17px; font-weight: 700; line-height: 24px; color: #62656a; letter-spacing: -.18px; }
.op-row { display: flex; margin-top: 6px; align-items: center; gap: 32px; }
.select { width: 205px; height: 41px; border: 1px solid #ddd; border-radius: 2px; display: flex; align-items: center; justify-content: space-between; padding: 0 7px 0 6px; color: #414750; }
.labels { display: flex; margin-top: 13px; }
.labels span:nth-child(1) { width: 168px; letter-spacing: 0; }
.labels span:nth-child(2) { width: 42px; letter-spacing: -.5px; }
.val-row { display: flex; margin-top: 7px; align-items: center; }
.input { width: 154px; height: 37px; border: 1px solid #d4d4d4; border-radius: 2px; display: flex; align-items: center; justify-content: space-between; padding: 0 14px 0 15px; color: #35383d; }
.sign { margin-left: 20px; }
.swatch { margin-left: 24px; width: 21px; height: 21px; border-radius: 2px; box-shadow: 0 1px 4px rgba(0, 0, 0, .4); }
.check { display: flex; margin-top: 17px; color: #8e9092; }
.check i { width: 22px; height: 22px; border: 1px solid #cbb9a0; border-radius: 2px; margin-left: -1px; }
.check span { margin-left: 6px; line-height: 19px; letter-spacing: .06px; }
.else { height: 20px; margin: 25px 0 17px; display: flex; font-size: 15px; line-height: 20px; color: #62656a; padding-left: 5px; }
.else i { width: 93px; height: 2px; background: #d9d9d9; margin-top: 17px; }
.else span { width: 60px; text-align: center; letter-spacing: 1.6px; }
.add-cond { margin-top: 30px; border-top: 1px solid #c6c6c6; padding: 14px 0 0 9px; display: flex; align-items: center; gap: 8px; color: #1a9bd8; line-height: 24px; }
.scrollbar { width: 17px; background: #f0f0f0; display: flex; flex-direction: column; }
.scrollbar i { height: 318px; background: #cdcdcd; margin-top: 206px; }
.panel-foot { flex: 1; border-top: 1px solid #c2c2c2; border-bottom: 1px solid #ddd; padding: 25px 24px 0 25px; }
button { display: block; font: 400 17px/24px "Noto Sans", sans-serif; border-radius: 2px; padding: 0; }
.apply { width: 275px; height: 35px; border: 0; background: #19719a; color: #fff; font-weight: 500; }
.pair { display: flex; justify-content: space-between; margin-top: 6px; }
.close, .clear { height: 37px; background: #fff; border: 1px solid #19719a; color: #19719a; width: 131px; }
.clear { border-color: #cc1f4b; color: #cc1f4b; width: 132px; }

/* canvas */
.canvas { width: 1456px; flex: none; display: flex; flex-direction: column; background: #0b2633; }
.wells { height: 51px; background: #f6f6f6; border-bottom: 1px solid #c4c8ca; display: flex; align-items: center; padding: 0 13px; color: #687078; white-space: nowrap; }
.w-title { font-size: 17px; width: 108px; letter-spacing: .08px; }
.wells b { color: #16191f; font-weight: 600; }
.w-group { width: 75px; letter-spacing: -.2px; }
.w-date { width: 149px; margin-left: 5px; letter-spacing: -.03px; }
.w-cat { width: 108px; margin-left: 4px; letter-spacing: -.22px; }
.w-value { width: 51px; letter-spacing: -.11px; }
.w-disc { margin-left: 7px; width: 126px; letter-spacing: -.26px; }
.w-prof { margin-left: 7px; letter-spacing: -.1px; }
.w-chev { margin-left: auto; margin-top: 2px; }
.blue { fill: none; stroke: #1a9bd8; stroke-width: 1.7; margin-top: -4px; }
.hash { stroke: #2dac00; stroke-width: 1.7; margin-top: -3px; }
.sheets { height: 47px; display: flex; padding-top: 6px; }
.sheets::before { content: ""; width: 7px; border-bottom: 1px solid #273f4b; }
.sheet { width: 102px; border: 1px solid #273f4b; border-bottom: 0; display: flex; align-items: center; justify-content: space-between; padding: 0 3px 0 12px; color: #e8ecee; font-weight: 700; letter-spacing: .2px; }
.sheet-rest { flex: 1; border-bottom: 1px solid #273f4b; padding: 12px 0 0 12px; }
.visual { position: relative; flex: 1; padding-left: 10px; color: #dbe1e4; }
.visual h1 { font-size: 17px; line-height: 24px; padding-top: 16px; letter-spacing: .03px; font-weight: 400; color: #e3e8ea; }
.table { margin-top: 14px; width: 472px; height: 595px; overflow: hidden; }
.tr { display: grid; grid-template-columns: 105px 180px 87px 100px; height: 31.24px; line-height: 31px; border-top: 1px solid #273f4b; }
.tr.th { height: 30px; line-height: 28px; font-weight: 600; color: #eef1f2; }
.tr.odd { background: #162d3a; }
.tr > span { border-right: 1px solid #273f4b; padding: 0 10px; letter-spacing: -.13px; overflow: hidden; white-space: nowrap; }
.tr > span:first-child { border-left: 1px solid #273f4b; letter-spacing: 0; }
.tr > span:nth-child(n + 3) { text-align: right; letter-spacing: 0; }
.tr.th > span { padding: 0 11px; letter-spacing: -.26px; }
.tr.th > span:nth-child(4) { letter-spacing: 0; }
.tr > .profit { display: flex; justify-content: space-between; align-items: center; padding-left: 11px; }
.tools { position: absolute; right: 15px; top: 5px; width: 107px; height: 30px; border: 1px solid #c3cbce; border-radius: 4px; display: flex; align-items: center; padding: 0 0 0 5px; box-shadow: 0 2px 5px rgba(0, 0, 0, .5); }
.tools svg { fill: none; stroke: #e8ecee; stroke-width: 1.7; }
.tools svg:nth-child(2) { margin-left: 2px; background: #172d3a; border-radius: 3px; }
.tools svg:nth-child(3) { margin-left: 6px; }
.tools svg:nth-child(4) { margin-left: 16px; }
.vscroll { position: absolute; right: 10px; top: 54px; width: 10px; height: 306px; border-radius: 5px; background: #5c6d76; }

/* task bar */
.taskbar { height: 60px; border-top: 1px solid #4a4048; display: flex; color: #fff; background: linear-gradient(90deg, #231c31 0, #251c35 380px, #2c1a3b 480px, #351933 640px, #38221f 820px, #3c2220 980px, #45191d 1130px, #4c1216 1240px, #441711 1540px, #361a1c 1920px); }
.widget { position: relative; width: 688px; display: flex; padding: 12px 0 0 25px; }
.w-badge { position: absolute; left: 39px; top: 7px; width: 20px; height: 20px; border-radius: 50%; background: #ff9a9f; color: #222; font-size: 13px; text-align: center; line-height: 20px; }
.w-text { display: flex; flex-direction: column; margin: -4px 0 0 7px; color: #bdbac2; letter-spacing: -.27px; }
.w-text span:first-child { color: #fff; letter-spacing: -.21px; }
.apps { display: flex; gap: 5px; padding-top: 4px; }
.app { position: relative; width: 50px; height: 50px; border-radius: 5px; display: flex; justify-content: center; padding-top: 10px; }
.app.on { background: rgba(255, 255, 255, .07); box-shadow: inset 0 0 0 1px rgba(255, 255, 255, .05); }
.mark { position: absolute; left: 21px; bottom: 1px; width: 8px; height: 4px; border-radius: 2px; background: #a29a9a; }
.mark.wide { left: 15px; width: 20px; background: #dc9de6; }
.mark.pink { background: #ff9ea0; }
.app-badge { position: absolute; left: 30px; top: 4px; height: 20px; width: 20px; border-radius: 50%; font-size: 13px; line-height: 20px; text-align: center; color: #fff; background: #f0545a; letter-spacing: -.5px; }
.app-badge.lilac { background: #dc9de6; color: #222; font-size: 14px; }
.app-badge.red { width: 18px; height: 18px; line-height: 18px; left: 27px; }
.tray { margin-left: auto; display: flex; align-items: center; padding-right: 24px; }
.lang { margin: -2px 0 0 28px; width: 50px; letter-spacing: -.2px; }
.wifi { margin: -2px 0 0 1px; }
.vol { margin: 0 11px 0 10px; }
.clock { width: 97px; display: flex; flex-direction: column; align-items: flex-end; line-height: 20px; letter-spacing: -.27px; margin-top: -3px; }
.count { margin-left: 8px; width: 22px; height: 22px; border-radius: 50%; background: #dc9de6; color: #222; font-size: 12px; line-height: 22px; text-align: center; }
</style>
